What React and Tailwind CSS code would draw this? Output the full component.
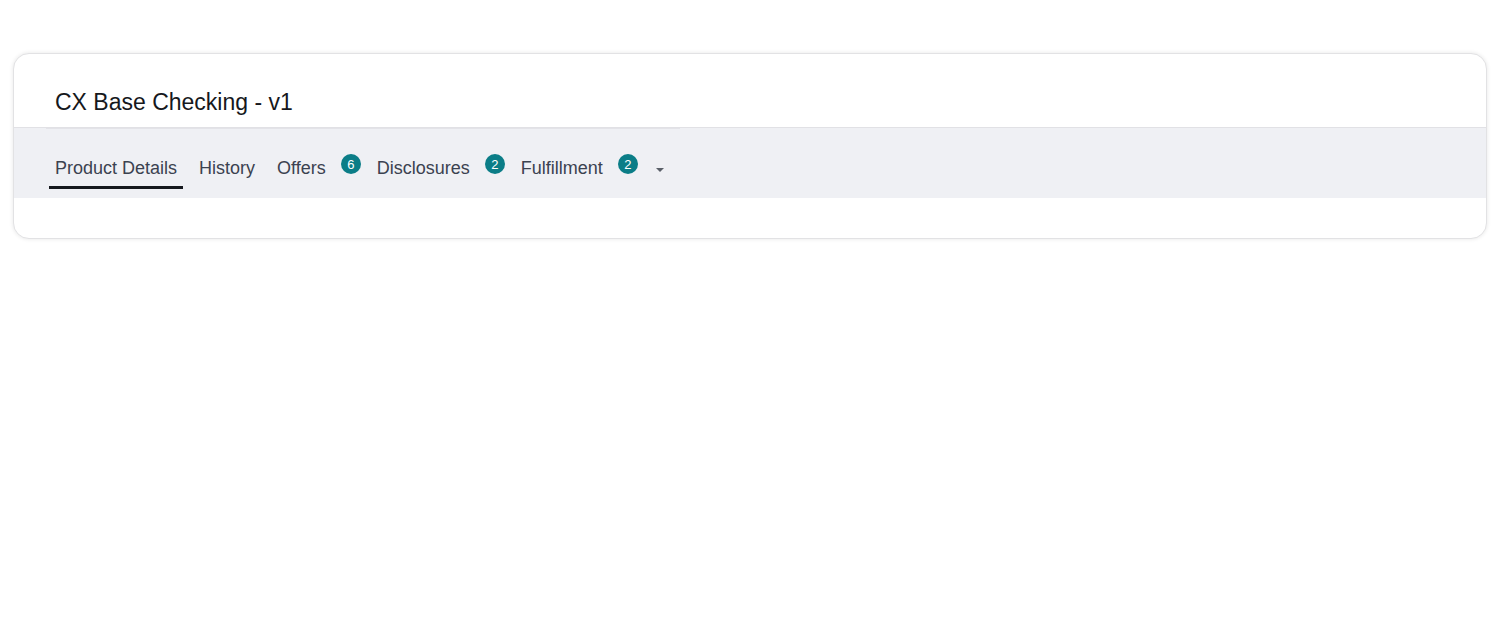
import React from "react";

function Badge({ n }) {
  return (
    <span className="ml-[15px] mt-[-2px] flex h-5 w-5 shrink-0 items-center justify-center rounded-full bg-[#0b7d87] text-[13px] leading-none text-white">
      {n}
    </span>
  );
}

function Tab({ label, badge, active }) {
  return (
    <div
      className={
        "flex items-start pl-[6px] pb-[6px] border-b-[3px] " +
        (badge ? "pr-0 " : "pr-[6px] ") +
        (active ? "border-[#15181d]" : "border-transparent")
      }
    >
      <span className="text-[18px] leading-[24px] text-[#3b4250]">{label}</span>
      {badge ? <Badge n={badge} /> : null}
    </div>
  );
}

export default function App() {
  return (
    <div
      className="min-h-[640px] bg-white px-[13px] pt-[53px]"
      style={{ fontFamily: '"Liberation Sans", Arial, sans-serif' }}
    >
      <div className="w-[1474px] overflow-hidden rounded-[16px] border border-[#e2e2e4] bg-white shadow-[0_0_4px_rgba(0,0,0,0.10)]">
        <div className="h-[74px] border-b border-[#e1e1e5]">
          <h1 className="pl-[41px] pt-[34px] text-[23px] leading-[28px] text-[#16181c]">
            CX Base Checking - v1
          </h1>
        </div>
        <div className="bg-[#eff0f4] pb-[9px]">
          <div className="ml-[32px] h-px w-[634px] bg-[#e3e3e8]" />
          <div className="flex items-start gap-[10px] pl-[35px] pt-[27px]">
            <Tab label="Product Details" active />
            <Tab label="History" />
            <Tab label="Offers" badge="6" />
            <Tab label="Disclosures" badge="2" />
            <Tab label="Fulfillment" badge="2" />
            <svg className="ml-[8px] mt-[12px]" width="8" height="4" viewBox="0 0 8 4">
              <path d="M0 0 L8 0 L4 4 Z" fill="#5a5f68" />
            </svg>
          </div>
        </div>
        <div className="h-[40px]" />
      </div>
    </div>
  );
}
